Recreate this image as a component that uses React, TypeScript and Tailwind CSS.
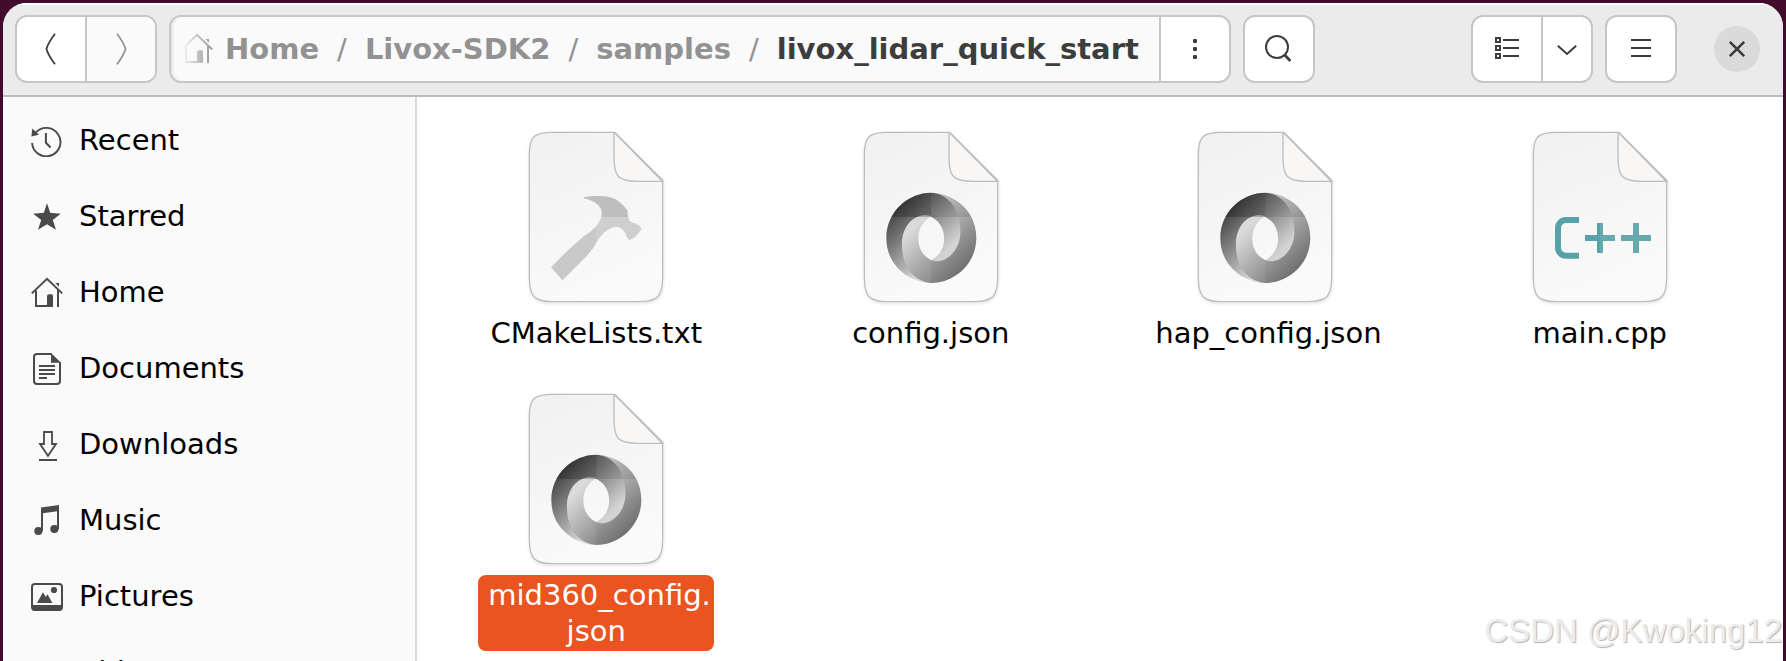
import { useId, type ReactNode } from "react";

const INK = "#4a4a4a";

function Icon({ children, className = "" }: { children: ReactNode; className?: string }) {
  return (
    <svg
      viewBox="0 0 32 32"
      className={`size-8 shrink-0 ${className}`}
      fill="none"
      stroke="currentColor"
      strokeWidth={2}
      aria-hidden="true"
    >
      {children}
    </svg>
  );
}

const RecentIcon = () => (
  <Icon>
    <path d="M1.1 18 A14.2 14.2 0 1 0 4.6 7.7" strokeWidth={1.9} />
    <path d="M1.3 3.6 L8 9.8 L0.4 11.4 Z" fill={INK} stroke="none" />
    <path d="M14.9 8 V17.8 L19.6 22.5" />
  </Icon>
);

const StarIcon = () => (
  <Icon>
    <path
      d="M16 2.3 L19.2 11.8 L29.7 12.8 L21.8 19 L25 28.7 L16 23.2 L7 28.7 L10.2 19 L2.2 12.8 L12.8 11.8 Z"
      fill={INK}
      stroke="none"
    />
  </Icon>
);

function HomeIcon({ className = "" }: { className?: string }) {
  return (
    <Icon className={className}>
      <path d="M0.8 16.4 L16 1.8 L31.2 16.4" />
      <path d="M5 13.5 V29 H20" />
      <path d="M27 12.5 V30" />
      <path d="M24.3 6 H28 V9.8 Z" fill="currentColor" stroke="none" />
      <path d="M16 30 V19 Q16 17.3 18 17.3 H20.5 Q22 17.3 22 19 V30 Z" fill="currentColor" stroke="none" />
    </Icon>
  );
}

const DocumentsIcon = () => (
  <Icon>
    <path d="M20.5 1 H6 Q3 1 3 4 V28 Q3 31 6 31 H26 Q29 31 29 28 V9" />
    <path d="M20 0 L30 9.7 H20 Z" fill={INK} stroke="none" />
    <path d="M8 13 H24 M8 17 H24 M8 21 H24 M8 25 H16" />
  </Icon>
);

const DownloadsIcon = () => (
  <Icon>
    <path d="M13 3 H21 V15 H25 L17 26.8 L9 15 H13 Z" strokeWidth={1.8} />
    <path d="M8 31 H26" />
  </Icon>
);

const MusicIcon = () => (
  <Icon>
    <path d="M10 2.4 L28 0 V6 L10 8.4 Z" fill={INK} stroke="none" />
    <path d="M11 3 V26 M27 2 V24" />
    <circle cx="7.4" cy="26" r="4.1" fill={INK} stroke="none" />
    <circle cx="23.4" cy="24" r="4.1" fill={INK} stroke="none" />
  </Icon>
);

const PicturesIcon = () => (
  <Icon>
    <rect x="1" y="3" width="30" height="26" rx="3" />
    <path d="M1 24 H31 V27 Q31 29.7 28 29.7 H4 Q1 29.7 1 27 Z" fill={INK} stroke="none" />
    <path d="M6 22 L12 11.3 L14.7 16 L16.5 13.2 L21.4 22 Z" fill={INK} stroke="none" />
    <circle cx="23" cy="9" r="3.1" fill={INK} stroke="none" />
  </Icon>
);

const VideosIcon = () => (
  <Icon>
    <rect x="3" y="6" width="26" height="20" rx="2" />
    <path d="M9 6 V26 M23 6 V26" />
  </Icon>
);

const places = [
  { name: "Recent", icon: <RecentIcon /> },
  { name: "Starred", icon: <StarIcon /> },
  { name: "Home", icon: <HomeIcon /> },
  { name: "Documents", icon: <DocumentsIcon /> },
  { name: "Downloads", icon: <DownloadsIcon /> },
  { name: "Music", icon: <MusicIcon /> },
  { name: "Pictures", icon: <PicturesIcon /> },
  { name: "Videos", icon: <VideosIcon /> },
];

function Sheet({ children }: { children: ReactNode }) {
  const id = useId();
  return (
    <svg viewBox="66 42 450 558" className="h-[186px] w-[150px]" aria-hidden="true">
      <defs>
        <linearGradient id={`${id}p`} x1="0" y1="0" x2="0.35" y2="1">
          <stop offset="0" stopColor="#f1f1f1" />
          <stop offset="0.5" stopColor="#f5f5f5" />
          <stop offset="1" stopColor="#fafafa" />
        </linearGradient>
        <filter id={`${id}s`} x="-10%" y="-10%" width="120%" height="120%">
          <feDropShadow dx="1" dy="4" stdDeviation="4" floodColor="#000" floodOpacity="0.12" />
        </filter>
      </defs>
      <path
        d="M347 67 H160 C105 67 91 80 91 135 V500 C91 560 105 575 165 575 H415 C477 575 491 560 491 500 V211 Z"
        fill={`url(#${id}p)`}
        stroke="#bdbdbd"
        strokeWidth="4"
        filter={`url(#${id}s)`}
      />
      <path d="M345 69 V140 C345 200 357 214 417 214 H490 L347 68" fill="#f8f7f6" stroke="#bdbdbd" strokeWidth="4" />
      {children}
    </svg>
  );
}

const HAMMER =
  "M254 262 Q275 258 292 258 Q332 257 350 268 Q375 285 386 303 Q386 322 391 332 Q397 338 408 340 Q422 345 427 356 Q415 380 391 391 Q383 383 378 368 Q368 351 352 350 Q335 350 315 368 Q300 382 292 398 Q282 418 264 437 Q232 470 190 511 L156 472 Q205 420 255 378 Q274 368 290 350 Q307 332 308 312 Q309 296 295 283 Q278 270 254 265 Z";

function HammerSheet() {
  const id = useId();
  return (
    <Sheet>
      <clipPath id={`${id}h`}>
        <path d={HAMMER} />
      </clipPath>
      <path d={HAMMER} fill="#c9c9c9" />
      <g clipPath={`url(#${id}h)`}>
        <rect x="66" y="240" width="450" height="81" fill="#000" opacity="0.05" />
        <rect x="291" y="321" width="200" height="200" fill="#fff" opacity="0.12" />
      </g>
    </Sheet>
  );
}

const RING_BACK =
  "M79.865 119.1c35.398 48.255 70.04-13.235 69.989-50.587-.06-44.168-44.773-68.85-70.023-68.85C39.31-.336 0 33.145 0 80.066 0 132.213 45.29 160 79.831 160c-7.814-1.125-33.864-6.706-34.212-67.167-.236-40.879 13.338-57.217 34.176-50.11.467.172 22.955 9.042 22.955 38.006 0 28.843-22.885 38.372-22.885 38.372z";
const RING_FRONT =
  "M79.823 41.4C56.433 33.34 27.78 52.618 27.78 91.23c0 63.048 46.72 68.77 52.384 68.77C120.688 160 160 126.518 160 79.6 160 27.451 114.71-.336 80.169-.336c9.567-1.325 51.564 10.355 51.564 69.373 0 38.488-32.243 59.4-51.784 50.112-.467-.171-22.955-9.042-22.955-38.006 0-28.844 22.829-39.743 22.829-39.743z";

function JsonSheet() {
  const id = useId();
  return (
    <Sheet>
      <g transform="translate(157 249) scale(1.6875)">
        <defs>
          <linearGradient id={`${id}a`} gradientUnits="userSpaceOnUse" x1="23" y1="23" x2="105" y2="105">
            <stop offset="0" stopColor="#444444" />
            <stop offset="1" stopColor="#dcdcdc" />
          </linearGradient>
          <linearGradient id={`${id}b`} gradientUnits="userSpaceOnUse" x1="55" y1="55" x2="136" y2="136">
            <stop offset="0" stopColor="#dadada" />
            <stop offset="1" stopColor="#757575" />
          </linearGradient>
          <clipPath id={`${id}c`}>
            <path d={RING_BACK} />
            <path d={RING_FRONT} />
          </clipPath>
        </defs>
        <path d={RING_BACK} fill={`url(#${id}a)`} fillRule="evenodd" />
        <path d={RING_FRONT} fill={`url(#${id}b)`} fillRule="evenodd" />
        <g clipPath={`url(#${id}c)`}>
          <rect x="0" y="-1" width="160" height="43.7" fill="#000" opacity="0.13" />
          <rect x="0" y="-1" width="80" height="43.7" fill="#000" opacity="0.1" />
          <rect x="80" y="42.7" width="80" height="118" fill="#000" opacity="0.04" />
        </g>
      </g>
    </Sheet>
  );
}

function CppSheet() {
  return (
    <Sheet>
      <svg x="150" y="310" width="78" height="150" viewBox="150 310 78 150">
        <rect x="165" y="330" width="120" height="107" rx="24" fill="none" stroke="#57a2a8" strokeWidth="18" />
      </svg>
      <g fill="#67aaae">
        <rect x="246" y="375" width="90" height="18" />
        <rect x="282" y="339" width="18" height="90" />
        <rect x="354" y="375" width="90" height="18" />
        <rect x="390" y="339" width="18" height="90" />
      </g>
      <g fill="#57a2a8">
        <rect x="246" y="375" width="45" height="18" />
        <rect x="282" y="339" width="9" height="90" />
      </g>
    </Sheet>
  );
}

const files = [
  { id: "cmake", label: "CMakeLists.txt", art: <HammerSheet /> },
  { id: "config", label: "config.json", art: <JsonSheet /> },
  { id: "hap", label: "hap_config.json", art: <JsonSheet /> },
  { id: "main", label: "main.cpp", art: <CppSheet /> },
  {
    id: "mid360",
    label: (
      <>
        mid360_config.
        <wbr />
        json
      </>
    ),
    art: <JsonSheet />,
    selected: true,
  },
];

const parents = ["Home", "Livox-SDK2", "samples"];

const FRAME = "flex h-[68px] overflow-hidden rounded-xl border-2 border-[#c6c6c6] bg-white text-[#3d3d3d]";
const BUTTON = "flex w-[68px] items-center justify-center";

export default function App() {
  return (
    <div className="relative h-screen overflow-hidden bg-[#420b2b] px-[3px] pt-[3px] font-['DejaVu_Sans',sans-serif] text-[29px] leading-9">
      <div className="flex h-full flex-col overflow-hidden rounded-t-3xl bg-white">
        <header className="flex h-[94px] shrink-0 items-center gap-3 border-b-2 border-[#bdbdbd] bg-[#ebebeb] pr-[23px] pl-3 shadow-[inset_0_2px_0_#fff]">
          <div className={FRAME}>
            <button aria-label="Back" className={BUTTON}>
              <Icon>
                <path d="M20 0.8 C16 6 13 11 11.4 16 C13 21 16 26 20 31.2" strokeWidth={1.8} />
              </Icon>
            </button>
            <button
              aria-label="Forward"
              disabled
              className="flex w-[70px] items-center justify-center border-l-2 border-[#c6c6c6] bg-[#fafafa] text-[#929292]"
            >
              <Icon>
                <path d="M12 0.8 C16 6 19 11 20.6 16 C19 21 16 26 12 31.2" strokeWidth={1.8} />
              </Icon>
            </button>
          </div>

          <div className={FRAME}>
            <nav
              aria-label="Path"
              className="flex items-center rounded-l-[10px] bg-[#fafafa] pr-5 pl-2.5 font-bold text-[#929292] shadow-[inset_3px_0_2px_-1px_#e4e4e4]"
            >
              <HomeIcon className="mr-3 mask-l-from-0% mask-l-to-100%" />
              {parents.map((name) => (
                <span key={name} className="flex">
                  <a href="#">{name}</a>
                  <span className="mx-[18px] font-normal">/</span>
                </span>
              ))}
              <a href="#" aria-current="page" className="text-[#3d3d3d]">
                livox_lidar_quick_start
              </a>
            </nav>
            <button aria-label="Folder menu" className="flex w-[70px] items-center justify-center border-l-2 border-[#c6c6c6]">
              <Icon>
                <g fill="currentColor" stroke="none">
                  <rect x="14" y="6" width="4" height="4" rx="1" />
                  <rect x="14" y="14" width="4" height="4" rx="1" />
                  <rect x="14" y="22" width="4" height="4" rx="1" />
                </g>
              </Icon>
            </button>
          </div>

          <div className={FRAME}>
            <button aria-label="Search" className={BUTTON}>
              <Icon>
                <circle cx="14" cy="14" r="11" />
                <path d="M21.8 22 L27.4 28" strokeWidth={2.6} />
              </Icon>
            </button>
          </div>

          <div className={`${FRAME} ml-auto`}>
            <button aria-label="List view" className={BUTTON}>
              <Icon>
                <path d="M5 5 H9 V9 H5 Z M5 13 H9 V17 H5 Z M5 21 H9 V25 H5 Z" />
                <path d="M12 7 H28 M12 15 H28 M12 23 H28" />
              </Icon>
            </button>
            <button aria-label="View options" className="flex w-[50px] items-center justify-center border-l-2 border-[#c6c6c6]">
              <Icon>
                <path d="M6.8 12.8 L16 21 L25.2 12.8" />
              </Icon>
            </button>
          </div>

          <div className={FRAME}>
            <button aria-label="Main menu" className={BUTTON}>
              <Icon>
                <path d="M6 7 H26 M6 15 H26 M6 23 H26" />
              </Icon>
            </button>
          </div>

          <button
            aria-label="Close"
            className="ml-[25px] flex size-[46px] items-center justify-center rounded-full bg-[#dadada] text-[#3d3d3d]"
          >
            <Icon>
              <path d="M8.8 8.8 L23.2 23.2 M23.2 8.8 L8.8 23.2" strokeWidth={2.6} />
            </Icon>
          </button>
        </header>

        <div className="flex min-h-0 flex-1">
          <aside className="w-[414px] shrink-0 overflow-hidden border-r-2 border-[#d9d9d9] bg-[#fafafa] pt-1.5">
            <nav aria-label="Places">
              <ul>
                {places.map((place) => (
                  <li key={place.name}>
                    <a href="#" className="flex h-[76px] items-center gap-4 pl-7 text-black">
                      <span className="text-[#4a4a4a]">{place.icon}</span>
                      <span className="pb-0.5">{place.name}</span>
                    </a>
                  </li>
                ))}
              </ul>
            </nav>
          </aside>

          <main className="min-w-0 flex-1 overflow-hidden pt-[27px] pr-4 pl-3">
            <div className="grid grid-cols-4 gap-y-[33px]">
              {files.map((file) => (
                <button key={file.id} aria-pressed={!!file.selected} className="flex flex-col items-center gap-[3px]">
                  {file.art}
                  <span
                    className={
                      file.selected
                        ? "max-w-[236px] rounded-lg bg-[#e95420] px-2.5 py-0.5 text-white"
                        : "max-w-[236px] rounded-lg px-2 py-0.5 text-black"
                    }
                  >
                    {file.label}
                  </span>
                </button>
              ))}
            </div>
          </main>
        </div>
      </div>

      <div className="pointer-events-none absolute right-1 bottom-3 font-['Liberation_Sans',sans-serif] text-[33px] text-[#ececec] [text-shadow:1px_1px_1px_#b4b4b4]">
        CSDN @Kwoking12
      </div>
    </div>
  );
}
